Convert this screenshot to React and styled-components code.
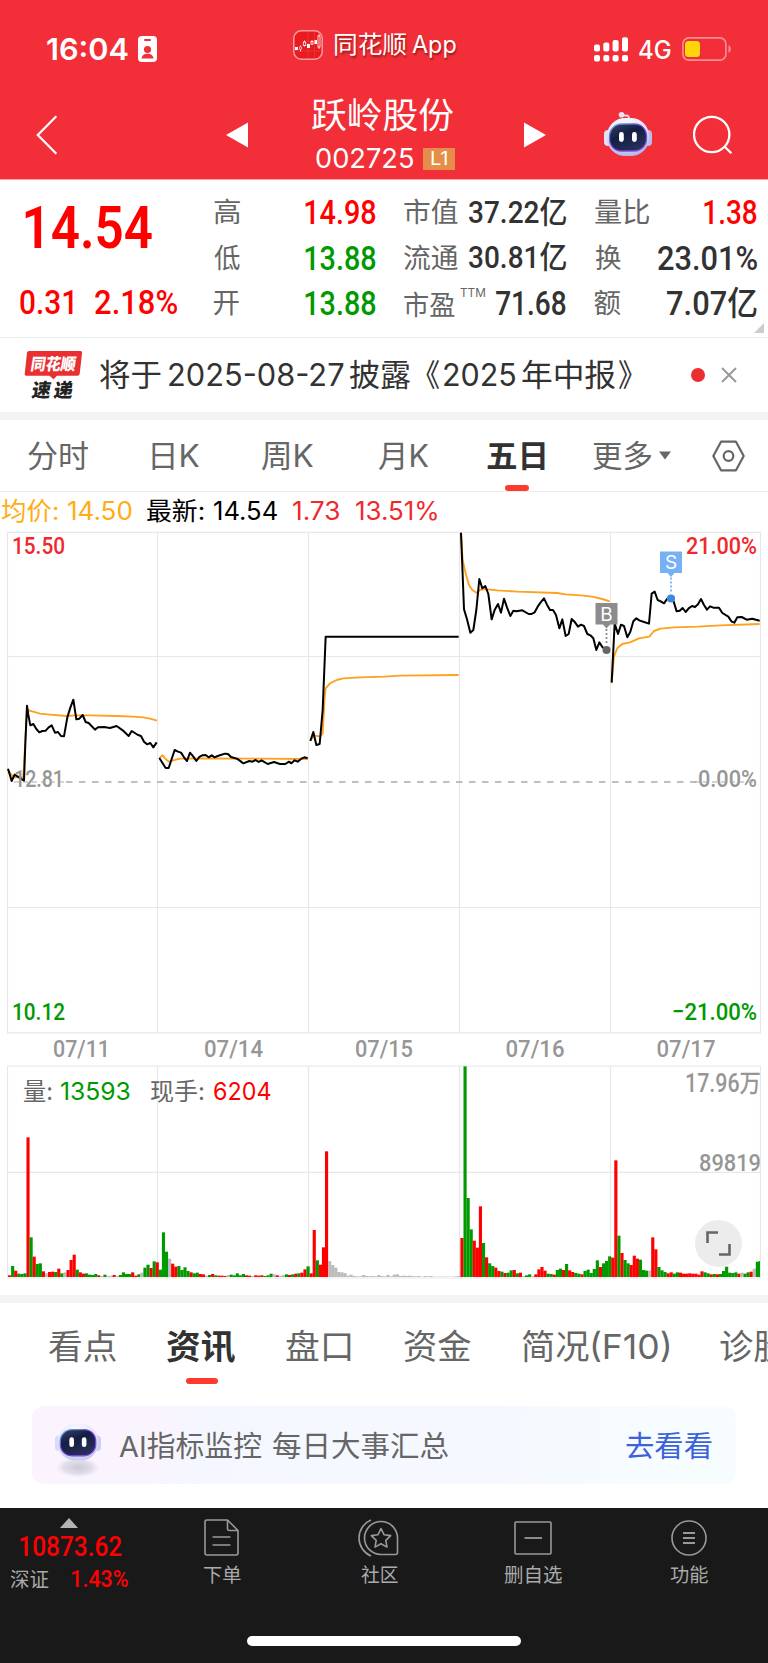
import React, { useLayoutEffect, useRef, useState } from 'react';
import styled, { createGlobalStyle, css } from 'styled-components';

const SANS = '"Inter", "Noto Sans CJK SC", sans-serif';
const DIGITS = '"Roboto", "Noto Sans CJK SC", sans-serif';

const GlobalStyle = createGlobalStyle`
  * { box-sizing: border-box; }
  body { margin: 0; background: #fff; font-family: ${SANS}; }
  svg { display: block; flex: none; }
`;

/* ---------- text that is fitted to a known width ---------- */

const LabelBox = styled.span`
  flex: none;
  display: block;
  width: ${(p) => p.$w}px;
  height: ${(p) => p.$size}px;
  line-height: ${(p) => p.$size}px;
  margin-left: ${(p) => p.$gap || 0}px;
  margin-bottom: ${(p) => (p.$lift || 0) * 2}px;
  font-family: ${(p) => (p.$digits ? DIGITS : SANS)};
  font-size: ${(p) => p.$size}px;
  font-weight: ${(p) => p.$weight || 400};
  color: ${(p) => p.$color || 'inherit'};
  white-space: pre;
  ${(p) =>
    p.$shadow &&
    css`
      text-shadow: 1px 2px 2px rgba(90, 0, 0, 0.55);
    `}
`;

const LabelInk = styled.span`
  display: inline-block;
  transform-origin: 0 50%;
`;

function Label({ w, size, weight = 400, color, digits, gap, lift, shadow, children }) {
  const ref = useRef(null);
  const [fit, setFit] = useState({ x: 0, s: 1 });
  useLayoutEffect(() => {
    const ctx = document.createElement('canvas').getContext('2d');
    ctx.font = `${weight} ${size}px ${digits ? DIGITS : SANS}`;
    const m = ctx.measureText(ref.current.textContent);
    const s = w / (m.actualBoundingBoxRight + m.actualBoundingBoxLeft);
    setFit({ x: m.actualBoundingBoxLeft * s, s });
  }, [w, size, weight, digits, children]);
  return (
    <LabelBox $w={w} $size={size} $weight={weight} $color={color} $digits={digits} $gap={gap} $lift={lift} $shadow={shadow}>
      <LabelInk ref={ref} style={{ transform: `translateX(${fit.x}px) scaleX(${fit.s})` }}>
        {children}
      </LabelInk>
    </LabelBox>
  );
}

const IconSlot = styled.span`
  flex: none;
  display: block;
  margin-left: ${(p) => p.$gap || 0}px;
  margin-bottom: ${(p) => (p.$lift || 0) * 2}px;
`;

/* ---------- page ---------- */

const Page = styled.main`
  width: 768px;
  height: 1663px;
  overflow: hidden;
  display: flex;
  flex-direction: column;
  background: #fff;
`;

const Row = styled.div`
  display: flex;
  align-items: center;
`;

const Divider = styled.div`
  flex: none;
  height: 8px;
  background: #f4f4f4;
`;

/* ---------- header ---------- */

const Header = styled.header`
  flex: none;
  height: 180px;
  background: #f22f38;
  color: #fff;
  border-bottom: 1px solid #f9a5a9;
`;

const StatusBar = styled(Row)`
  height: 98px;
  padding-left: 47px;
`;

const NavBar = styled(Row)`
  height: 81px;
  padding-left: 36px;
`;

const StockTitle = styled.div`
  width: 143px;
  height: 81px;
  margin-left: 64px;
`;

const NameLine = styled(Row)`
  height: 33px;
`;

const CodeLine = styled(Row)`
  height: 41px;
  margin-top: 7px;
  padding-left: 4px;
`;

const LevelBadge = styled.span`
  display: flex;
  align-items: center;
  width: 32px;
  height: 22px;
  margin-left: 10px;
  padding-left: 8px;
  background: #e58e49;
`;

function Robot({ pale }) {
  const id = pale ? 'robotPale' : 'robot';
  return (
    <svg width={pale ? 48 : 50} height={pale ? 62 : 46} viewBox={pale ? '0 0 50 64' : '0 0 50 46'} preserveAspectRatio="none">
      <defs>
        <radialGradient id={`${id}Head`} cx="45%" cy="25%" r="80%">
          <stop offset="0" stopColor="#fff" />
          <stop offset="0.6" stopColor="#e4e4fa" />
          <stop offset="1" stopColor={pale ? '#c4c7f0' : '#aaaee6'} />
        </radialGradient>
        <linearGradient id={`${id}Rim`} x1="0" y1="0" x2="1" y2="1">
          <stop offset="0" stopColor="#63b8ef" />
          <stop offset="0.5" stopColor="#6a39c8" />
          <stop offset="1" stopColor="#8a5af0" />
        </linearGradient>
        <linearGradient id={`${id}Face`} x1="0" y1="0" x2="0.6" y2="1">
          <stop offset="0" stopColor="#3b4466" />
          <stop offset="0.45" stopColor="#141d43" />
          <stop offset="1" stopColor="#28305a" />
        </linearGradient>
        <radialGradient id={`${id}Shade`}>
          <stop offset="0" stopColor="#cdc8d6" />
          <stop offset="0.7" stopColor="#e3deea" />
          <stop offset="1" stopColor="#f3edf8" stopOpacity="0.4" />
        </radialGradient>
      </defs>
      {pale && <ellipse cx="25" cy="52" rx="22" ry="10" fill={`url(#${id}Shade)`} />}
      <path d="M19 4.5h4.5a2.5 2.5 0 0 1 2.500 2.500v3" fill="none" stroke={pale ? '#f6f4fc' : '#dcdcf4'} strokeWidth="2" />
      <circle cx="18.500" cy="3.800" r="2.800" fill={pale ? '#f8f6fd' : '#e6e6f8'} />
      <rect x="1" y="19" width="8" height="16" rx="4" fill={pale ? '#d6dbf6' : '#dfe1f7'} />
      <rect x="41" y="19" width="8" height="16" rx="4" fill={pale ? '#cdd0f2' : '#b9bdea'} />
      <rect x="4" y="7" width="42" height="38" rx="18" fill={`url(#${id}Head)`} />
      <rect x="6.500" y="13" width="37" height="27" rx="12" fill={`url(#${id}Face)`} stroke={`url(#${id}Rim)`} strokeWidth="1.300" />
      <rect x="16" y="21" width="4.800" height="10" rx="2.400" fill="#fff" />
      <rect x="29" y="21" width="4.800" height="10" rx="2.400" fill="#fff" />
    </svg>
  );
}

function AppHeader() {
  return (
    <Header>
      <StatusBar>
        <Label w={81} size={30} weight={600}>16:04</Label>
        <IconSlot $gap={10}>
          <svg width="19" height="26" viewBox="0 0 19 26">
            <rect width="19" height="26" rx="4" fill="#fff" />
            <rect x="6" y="3" width="7" height="2" rx="1" fill="#f22f38" />
            <circle cx="9.500" cy="13.500" r="3.600" fill="#f22f38" />
            <path d="M3.500 22.500c.5-3.500 3-4.800 6-4.800s5.500 1.300 6 4.800z" fill="#f22f38" />
          </svg>
        </IconSlot>
        <IconSlot $gap={136} $lift={4.5}>
          <svg width="30" height="30" viewBox="0 0 30 30">
            <rect x="0.800" y="0.800" width="28.400" height="28.400" rx="7.500" fill="#e81c20" stroke="#f79c9f" strokeWidth="1.500" />
            <path d="M15 2v26M21.500 2v26M2 21h26" stroke="#ef4548" strokeWidth="0.500" />
            <rect x="2" y="17" width="3" height="3" fill="#fff" />
            <path d="M26 4v15M7.500 15.500v6M11.500 10.500v6M19 10v5" stroke="#fff" strokeWidth="0.800" />
            <rect x="6.500" y="16.500" width="2" height="3" rx="1" fill="#e81c20" stroke="#fff" strokeWidth="0.800" />
            <rect x="10.300" y="12" width="2.400" height="3.500" fill="#e81c20" stroke="#fff" strokeWidth="0.800" />
            <rect x="14" y="14" width="3" height="4" fill="#fff" />
            <rect x="18" y="11.500" width="2" height="2.500" fill="#e81c20" stroke="#fff" strokeWidth="0.800" />
            <rect x="21.500" y="10" width="2.500" height="4" fill="#fff" />
            <rect x="25" y="6" width="2" height="11" fill="#e81c20" stroke="#fff" strokeWidth="0.800" />
          </svg>
        </IconSlot>
        <Label w={71} size={24} gap={12} lift={4} shadow>同花顺</Label>
        <Label w={44} size={24} gap={6} lift={4} shadow>App</Label>
        <IconSlot $gap={138}>
          <svg width="34" height="25" viewBox="0 0 34 25" fill="#fff">
            <rect x="0" y="7.500" width="6" height="7" rx="2" />
            <rect x="9.300" y="5.500" width="6" height="9" rx="2" />
            <rect x="18.600" y="3" width="6" height="11.500" rx="2" />
            <rect x="28" y="0.300" width="6" height="14.200" rx="2" />
            <rect x="0" y="18" width="6" height="6.500" rx="2" />
            <rect x="9.300" y="18" width="6" height="6.500" rx="2" />
            <rect x="18.600" y="18" width="6" height="6.500" rx="2" />
            <rect x="28" y="18" width="6" height="6.500" rx="2" />
          </svg>
        </IconSlot>
        <Label w={32} size={25} weight={500} gap={11} lift={-1}>4G</Label>
        <IconSlot $gap={11}>
          <svg width="50" height="24" viewBox="0 0 50 24">
            <rect x="0.900" y="0.900" width="43" height="22.200" rx="6" fill="none" stroke="#f88f94" strokeWidth="1.600" />
            <rect x="3" y="4" width="15" height="16" rx="3.500" fill="#ffd60a" />
            <path d="M46.500 8c3 1.500 3 6.500 0 8z" fill="#f88f94" />
          </svg>
        </IconSlot>
      </StatusBar>
      <NavBar>
        <IconSlot $lift={3.5}>
          <svg width="22" height="40" viewBox="0 0 22 40">
            <path d="M20.300 1.300L1.800 20l18.500 18.700" fill="none" stroke="#fff" strokeWidth="2.200" />
          </svg>
        </IconSlot>
        <IconSlot $gap={168} $lift={3.5}>
          <svg width="22" height="26" viewBox="0 0 22 26"><path d="M22 0.500v25L0 13z" fill="#fff" /></svg>
        </IconSlot>
        <StockTitle>
          <NameLine><Label w={142} size={35} lift={-0.75}>跃岭股份</Label></NameLine>
          <CodeLine>
            <Label w={97} size={27}>002725</Label>
            <LevelBadge><Label w={16} size={18}>L1</Label></LevelBadge>
          </CodeLine>
        </StockTitle>
        <IconSlot $gap={69} $lift={3.5}>
          <svg width="22" height="26" viewBox="0 0 22 26"><path d="M0 0.500v25L22 13z" fill="#fff" /></svg>
        </IconSlot>
        <IconSlot $gap={57} $lift={4.5}><Robot /></IconSlot>
        <IconSlot $gap={40} $lift={3.5}>
          <svg width="40" height="40" viewBox="0 0 40 40" fill="none" stroke="#fff" strokeWidth="2.300">
            <circle cx="18.700" cy="19.500" r="17.700" />
            <path d="M31.500 31.500l6.800 6.800" />
          </svg>
        </IconSlot>
      </NavBar>
    </Header>
  );
}

/* ---------- quote ---------- */

const Quote = styled.section`
  flex: none;
  display: flex;
  position: relative;
  height: 158px;
  border-bottom: 1px solid #ececec;
`;

const PriceBlock = styled.div`
  width: 213.5px;
  padding: 18px 0 0 20px;
`;

const LastPrice = styled(Row)`
  height: 60px;
  padding-left: 5px;
`;

const Change = styled(Row)`
  height: 44px;
  margin-top: 22px;
`;

const StatGrid = styled.div`
  display: grid;
  grid-template-columns: 162px 162px 162px;
  grid-auto-rows: 45.500px;
  column-gap: 28.500px;
  padding-top: 10px;
`;

const Stat = styled(Row)`
  justify-content: space-between;
`;

const CornerMark = styled.i`
  position: absolute;
  right: 4px;
  bottom: 4px;
  border-left: 10px solid transparent;
  border-bottom: 10px solid #ccc;
`;

const RED = '#ff0000';
const GREEN = '#009900';
const INK = '#323232';
const GREY = '#666';

const stats = [
  { name: '高', nw: 26, value: '14.98', vw: 71, color: RED },
  { name: '市值', nw: 54, value: '37.22亿', vw: 97, size: 30.5 },
  { name: '量比', nw: 54, value: '1.38', vw: 53, color: RED },
  { name: '低', nw: 26, value: '13.88', vw: 71, color: GREEN },
  { name: '流通', nw: 54, value: '30.81亿', vw: 97, size: 30.5 },
  { name: '换', nw: 26, value: '23.01%', vw: 99 },
  { name: '开', nw: 26, value: '13.88', vw: 71, color: GREEN },
  { name: '市盈', nw: 51, value: '71.68', vw: 70, sup: true },
  { name: '额', nw: 26, value: '7.07亿', vw: 90 },
];

function QuotePanel() {
  return (
    <Quote>
      <PriceBlock>
        <LastPrice><Label w={127} size={60} weight={600} digits color={RED}>14.54</Label></LastPrice>
        <Change>
          <Label w={53} size={33} weight={500} digits color={RED}>0.31</Label>
          <Label w={82} size={33} weight={500} digits color={RED} gap={22}>2.18%</Label>
        </Change>
      </PriceBlock>
      <StatGrid>
        {stats.map((s, i) => (
          <Stat key={i}>
            <Row>
              <Label w={s.nw} size={27.5} color={GREY} lift={s.sup ? -2 : 0}>{s.name}</Label>
              {s.sup && <Label w={25} size={12} color={GREY} gap={5} lift={11}>TTM</Label>}
            </Row>
            <Label w={s.vw} size={s.size || 33} weight={500} digits color={s.color || INK}>{s.value}</Label>
          </Stat>
        ))}
      </StatGrid>
      <CornerMark />
    </Quote>
  );
}

/* ---------- notice ---------- */

const Notice = styled(Row)`
  flex: none;
  height: 74px;
  padding: 0 0 1px 24px;
  color: #323232;
`;

const LogoText = styled.text`
  font-family: ${SANS};
  font-weight: 900;
  fill: ${(p) => p.$fill};
`;

function NoticeBar() {
  return (
    <Notice>
      <svg width="60" height="50" viewBox="0 0 60 50">
        <path d="M5 1h51.500q1.800 0 1.600 1.800l-2.400 21q-.3 1.900-2.200 1.900H33l-3.500 3.500-4-3.500H2.300q-1.800 0-1.600-1.800L3 2.800Q3.200 1 5 1z" fill="#ea2f32" />
        <g transform="translate(6 20) skewX(-9)">
          <LogoText $fill="#fff" fontSize="16.500" textLength="45" lengthAdjust="spacingAndGlyphs">同花顺</LogoText>
        </g>
        <g transform="translate(7 46.500) skewX(-9)">
          <LogoText $fill="#222" fontSize="19" textLength="19" lengthAdjust="spacingAndGlyphs">速</LogoText>
          <LogoText $fill="#222" fontSize="19" x="22" textLength="19" lengthAdjust="spacingAndGlyphs">递</LogoText>
        </g>
      </svg>
      <Label w={61} size={31} gap={15.5}>将于</Label>
      <Label w={175} size={31} gap={8}>2025-08-27</Label>
      <Label w={61} size={31} gap={6}>披露</Label>
      <Label w={13} size={31} gap={15}>《</Label>
      <Label w={71} size={31} gap={5}>2025</Label>
      <Label w={93} size={31} gap={7}>年中报</Label>
      <Label w={13} size={31} gap={4}>》</Label>
      <IconSlot $gap={59.5}>
        <svg width="14" height="14"><circle cx="7" cy="7" r="7" fill="#ea2f32" /></svg>
      </IconSlot>
      <IconSlot $gap={16}>
        <svg width="16" height="16"><path d="M1 1l14 14M15 1L1 15" stroke="#999" strokeWidth="2" /></svg>
      </IconSlot>
    </Notice>
  );
}

/* ---------- chart tabs ---------- */

const PeriodTabs = styled(Row)`
  flex: none;
  height: 72px;
  padding-left: 28px;
  color: ${GREY};
  border-bottom: 1px solid #ececec;
`;

const Tab = styled.div`
  flex: none;
  position: relative;
  display: flex;
  align-items: center;
  height: 100%;
  margin-left: ${(p) => p.$gap || 0}px;
`;

const Underline = styled.i`
  position: absolute;
  left: 50%;
  bottom: ${(p) => p.$bottom}px;
  width: ${(p) => p.$w}px;
  height: 6px;
  margin-left: ${(p) => -p.$w / 2 + 0.5}px;
  border-radius: 3px;
  background: #ff3b30;
`;

function PeriodBar() {
  return (
    <PeriodTabs>
      <Tab><Label w={60} size={31}>分时</Label></Tab>
      <Tab $gap={64}><Label w={47} size={31}>日K</Label></Tab>
      <Tab $gap={63}><Label w={51} size={31}>周K</Label></Tab>
      <Tab $gap={65}><Label w={50} size={31}>月K</Label></Tab>
      <Tab $gap={59}>
        <Label w={58} size={31} weight={700} color={INK}>五日</Label>
        <Underline $w={24} $bottom={0} />
      </Tab>
      <Tab $gap={48}>
        <Label w={59} size={31}>更多</Label>
        <IconSlot $gap={7}>
          <svg width="12" height="9" viewBox="0 0 12 9"><path d="M0 0.500h12L6 8.500z" fill="#666" /></svg>
        </IconSlot>
      </Tab>
      <IconSlot $gap={41}>
        <svg width="33" height="32" viewBox="0 0 33 32" fill="none" stroke="#666" strokeWidth="2.200">
          <path d="M9 1.700h15L31.700 16 24 30.300H9L1.300 16z" strokeLinejoin="round" />
          <circle cx="16.500" cy="16" r="4.800" />
        </svg>
      </IconSlot>
    </PeriodTabs>
  );
}

const Legend = styled(Row)`
  flex: none;
  height: 39px;
  padding-left: 1px;
`;

function PriceLegend() {
  return (
    <Legend>
      <Label w={57} size={25} color="#ffad14">均价:</Label>
      <Label w={64} size={25} color="#ffad14" gap={9.5}>14.50</Label>
      <Label w={57} size={25} color="#000" gap={15.5}>最新:</Label>
      <Label w={63} size={25} color="#000" gap={10}>14.54</Label>
      <Label w={46} size={25} color="#f0282c" gap={16}>1.73</Label>
      <Label w={81} size={25} color="#f0282c" gap={17}>13.51%</Label>
    </Legend>
  );
}

/* ---------- charts ---------- */

const price = [
  '24,1076 35,1113 44,1094 58,1103 72,1112 76,1000 81,887 85,915 91,946 100,942 109,957 118,967 127,963 137,962 146,952 155,946 165,968 174,966 183,978 192,979 202,922 211,893 220,869 229,928 238,926 248,915 257,936 266,939 285,959 294,952 312,951 330,954 350,948 368,961 386,978 395,963 414,975 423,978 432,995 441,1003 451,999 460,1012 470,997',
  '478,1044 497,1074 506,1074 515,1047 524,1020 534,1025 543,1028 552,1042 561,1053 570,1028 580,1040 589,1053 598,1041 607,1036 617,1035 626,1042 635,1036 644,1042 653,1038 675,1031 684,1032 693,1041 711,1046 730,1060 748,1053 757,1055 767,1050 776,1056 785,1051 803,1062 822,1056 840,1062 856,1062 867,1055 874,1060 884,1051 893,1055 904,1046 913,1042 923,1045',
  '931,993 940,966 949,1005 959,1002 968,900 977,680 1376,680',
  '1383,368 1392,598 1401,628 1411,668 1420,660 1429,600 1438,507 1447,535 1456,528 1465,552 1475,628 1484,600 1494,582 1503,608 1512,566 1521,592 1531,618 1540,602 1549,604 1567,601 1586,612 1595,612 1604,607 1613,590 1622,577 1632,565 1641,584 1650,600 1659,600 1668,615 1678,655 1687,628 1697,678 1706,672 1715,627 1725,637 1734,650 1743,644 1752,648 1762,672 1771,676 1780,685 1789,720 1798,697 1808,712 1818,718',
  '1835,818 1844,640 1854,672 1863,644 1872,648 1882,682 1891,665 1900,634 1909,625 1918,631 1932,636 1947,641 1955,551 1964,545 1973,570 1982,574 1992,580 2002,566 2013,564 2021,575 2030,604 2039,602 2048,594 2057,606 2066,595 2076,588 2085,591 2094,583 2103,567 2112,585 2121,599 2130,589 2140,593 2157,593 2167,609 2185,620 2194,634 2203,638 2212,622 2225,621 2240,629 2257,626 2279,632',
];

const average = [
  '24,1080 40,1102 70,1102 81,900 100,905 120,911 150,914 200,918 225,916 270,916 350,918 400,920 430,922 450,926 471,932',
  '478,1044 488,1036 497,1047 506,1055 540,1046 600,1045 923,1047',
  '931,990 945,977 960,979 968,970 974,860 977,835 990,820 1010,810 1030,805 1080,802 1152,800 1202,797 1376,795',
  '1383,368 1388,450 1397,490 1407,525 1417,540 1432,550 1439,540 1452,537 1492,541 1552,545 1672,549 1697,553 1742,556 1777,560 1807,567 1829,574',
  '1835,818 1842,740 1852,714 1867,702 1890,697 1917,685 1948,680 1962,663 1982,656 2022,652 2092,650 2162,646 2279,642',
];

/* r = up, g = down, n = unchanged; the number is the bar height */
const volume = [
  'r5 g33 r19 g10 g9 g11 r419 g119 r61 g39 g41 r17 n11 r15 r16 g15 r25 g11 n14 r21 r51 r67 g22 r14 r10 g11 g7 g6 g9 r5 n3 g7 n3 n4 r6 n3 g6 g14 g9 g9 r14 r4 g8 n13 g28 g37 r27 g47 r44',
  'g22 g134 g76 n55 r40 r31 g33 g21 g29 g18 r14 g11 g13 r9 r8 n4 g6 r9 g5 r4 r4 r3 n6 g7 g5 g11 g5 g9 r5 r4 n3 r5 r4 r5 g3 g5 g10 n8 r5 n3 n6 g8 r6 g8 r10 g11 r13 r23 g32',
  'r11 r141 g50 r37 r89 r377 n48 n36 n28 n15 n14 n12 n4 n7 n3 n2 n2 n6 n3 n2 n3 n2 n6 n3 n2 n6 n2 n7 n8 n3 n4 n3 n4 n3 n2 n3 n1 n3 n2 n3 n1 n1 n1 n1 n1 n1 n1 n2 n3',
  'r117 g632 g237 g143 r109 r88 r212 g102 r59 g41 g33 r28 r18 g16 r12 g13 g20 r21 g11 r13 n3 g5 g8 n3 r8 r23 r30 r19 g10 g9 r7 g21 g25 r21 g39 r20 r15 g12 g10 r8 g18 g22 g12 g24 g50 r30 g41 g48 g62',
  'r58 r350 g124 r72 g51 g41 r36 r64 r55 g52 g21 g19 n19 r119 r83 g30 g20 g15 r11 r14 g10 g14 r13 r10 r10 r11 r10 r10 r7 r17 g14 g11 r8 g9 r8 g9 g18 g31 g13 g12 g14 r10 n13 g10 g14 r16 n25 g46 g48',
];
const barColor = { r: '#ff0000', g: '#009900', n: '#bbb' };
const gridX = [7.5, 157.5, 308.5, 459.5, 610.5, 760.5];

const ChartText = styled.text`
  font-family: ${DIGITS};
  font-size: ${(p) => p.$size || 24.5}px;
  font-weight: ${(p) => p.$weight || 500};
  fill: ${(p) => p.$fill || '#969696'};
  text-anchor: ${(p) => p.$anchor || 'start'};
`;

function Caption({ x, y, w, fill, size, weight, anchor, children }) {
  return (
    <ChartText x={x} y={y} textLength={w} lengthAdjust="spacingAndGlyphs" $fill={fill} $size={size} $weight={weight} $anchor={anchor}>
      {children}
    </ChartText>
  );
}

const MarkerText = styled.text`
  font-family: ${SANS};
  font-size: 19px;
  fill: #fff;
  text-anchor: middle;
`;

function Marker({ x, top, dot, color, dotColor, letter }) {
  return (
    <g>
      <path d={`M${x} ${top + 26}V${dot - 5}`} stroke={color} strokeWidth="1.800" strokeDasharray="2 2" />
      <circle cx={x} cy={dot} r="4" fill={dotColor} />
      <path d={`M${x - 11} ${top}h22v21.500h-7.500l-3.500 4-3.500-4h-7.500z`} fill={color} />
      <MarkerText x={x} y={top + 17.5}>{letter}</MarkerText>
    </g>
  );
}

const ChartArea = styled.section`
  flex: none;
  position: relative;
  height: 764px;
`;

const ExpandButton = styled.button`
  position: absolute;
  left: 695px;
  top: 689px;
  width: 47px;
  height: 47px;
  padding: 0;
  border: 0;
  border-radius: 50%;
  background: #ececec;
  display: grid;
  place-items: center;
`;

const VolumeLegend = styled(Row)`
  position: absolute;
  left: 24px;
  top: 546px;
  height: 29px;
`;

function Charts() {
  return (
    <ChartArea>
      <svg width="768" height="764" viewBox="0 531 768 764">
        <clipPath id="volumeArea"><rect x="8" y="1066" width="752" height="212" /></clipPath>
        <g stroke="#e8e8e8" strokeWidth="1.200" fill="none">
          {gridX.map((x) => (
            <path key={x} d={`M${x} 532V1033M${x} 1066V1278`} />
          ))}
          <path d="M7 532.300H761M7 656.500H761M7 907.500H761M7 1032.800H761M7 1066H761M7 1172.300H761M7 1278H761" />
        </g>
        <path d="M66 782H698" stroke="#aaa" strokeWidth="1.500" strokeDasharray="6.500 6.500" />
        <Caption x={12} y={554} w={53} fill="#f0282c">15.50</Caption>
        <Caption x={757} y={554} w={71} fill="#f0282c" anchor="end">21.00%</Caption>
        <Caption x={12} y={1020} w={53} fill={GREEN}>10.12</Caption>
        <Caption x={757} y={1020} w={85} fill={GREEN} anchor="end">−21.00%</Caption>
        <g transform="translate(0 410) scale(0.33333)" fill="none" strokeLinejoin="round">
          {average.map((p, i) => <polyline key={i} points={p} stroke="#ffa01e" strokeWidth="5.600" />)}
          {price.map((p, i) => <polyline key={i} points={p} stroke="#000" strokeWidth="6" />)}
        </g>
        <Caption x={14} y={787} w={50}>12.81</Caption>
        <Caption x={757} y={787} w={59} anchor="end">0.00%</Caption>
        <path d="M14 782H66M694 782H757" stroke="#aaa" strokeWidth="1.200" strokeDasharray="5 4" />
        <Caption x={53} y={1057} w={57}>07/11</Caption>
        <Caption x={204} y={1057} w={59}>07/14</Caption>
        <Caption x={355} y={1057} w={58}>07/15</Caption>
        <Caption x={505.5} y={1057} w={59}>07/16</Caption>
        <Caption x={656.5} y={1057} w={59}>07/17</Caption>
        <g clipPath="url(#volumeArea)">
          {volume.map((day, d) =>
            day.split(' ').map((b, i) => {
              const h = Number(b.slice(1)) / 3;
              return (
                <rect
                  key={`${d}-${i}`}
                  x={8 + d * 150.8 + i * 3.077}
                  y={1277 - h}
                  width="3.150"
                  height={h}
                  fill={barColor[b[0]]}
                />
              );
            })
          )}
        </g>
        <Caption x={761} y={1092} w={76} size={25} anchor="end">17.96万</Caption>
        <Caption x={761} y={1171} w={62} anchor="end">89819</Caption>
        <Marker x={606.5} top={603} dot={650} color="#8c8c8c" dotColor="#666" letter="B" />
        <Marker x={671} top={551.5} dot={598.5} color="#78b0f4" dotColor="#3f86dd" letter="S" />
      </svg>
      <VolumeLegend>
        <Label w={28} size={24} color={GREY}>量:</Label>
        <Label w={69} size={24} color={GREEN} gap={9}>13593</Label>
        <Label w={53} size={24} color={GREY} gap={21}>现手:</Label>
        <Label w={57} size={24} color={RED} gap={9.5}>6204</Label>
      </VolumeLegend>
      <ExpandButton>
        <svg width="25" height="25" viewBox="0 0 25 25" fill="none" stroke="#666" strokeWidth="2.600">
          <path d="M1.500 12V1.500H12M13 23.500H23.500V13" />
        </svg>
      </ExpandButton>
    </ChartArea>
  );
}

/* ---------- info tabs and banner ---------- */

const InfoTabs = styled(Row)`
  flex: none;
  width: 768px;
  overflow: hidden;
  height: 103px;
  padding: 0 0 15px 49px;
  color: ${GREY};
`;

function InfoBar() {
  return (
    <InfoTabs>
      <Tab><Label w={67} size={34.5}>看点</Label></Tab>
      <Tab $gap={51}>
        <Label w={68} size={34.5} weight={600} color={INK}>资讯</Label>
        <Underline $w={32} $bottom={7} />
      </Tab>
      <Tab $gap={51}><Label w={65} size={34.5}>盘口</Label></Tab>
      <Tab $gap={53}><Label w={67} size={34.5}>资金</Label></Tab>
      <Tab $gap={51}>
        <Label w={67} size={34.5}>简况</Label>
        <Label w={77} size={34.5} gap={3}>(F10)</Label>
      </Tab>
      <Tab $gap={51}><Label w={67} size={34.5}>诊股</Label></Tab>
    </InfoTabs>
  );
}

const Banner = styled(Row)`
  flex: none;
  width: 704px;
  height: 78px;
  margin: 0 32px 24px;
  padding-left: 22px;
  border-radius: 12px;
  background: linear-gradient(95deg, #fbf4ff 0%, #faf4ff 18%, #f4f7ff 24%, #f5f9ff 65%, #f7fdff 100%);
`;

function AiBanner() {
  return (
    <Banner>
      <IconSlot $lift={-3}><Robot pale /></IconSlot>
      <Label w={142} size={29} color={GREY} gap={16.5} lift={-1}>AI指标监控</Label>
      <Label w={175} size={29} color={GREY} gap={12} lift={-1}>每日大事汇总</Label>
      <Label w={86} size={29} color="#3a62dc" gap={178} lift={-1}>去看看</Label>
    </Banner>
  );
}

/* ---------- bottom bar ---------- */

const BottomBar = styled.nav`
  flex: none;
  height: 155px;
  background: #191919;
  display: flex;
  flex-direction: column;
  align-items: center;
`;

const BottomItems = styled.div`
  display: flex;
  width: 768px;
  height: 128px;
`;

const IndexBlock = styled.div`
  width: 150px;
  padding: 10px 0 0 10px;
`;

const IndexArrow = styled.i`
  display: block;
  width: 18px;
  margin-left: 50px;
  border: 9px solid transparent;
  border-top: 0;
  border-bottom: 10px solid #b4b4b4;
`;

const IndexRow = styled(Row)`
  height: ${(p) => p.$h}px;
  padding-left: ${(p) => p.$pad || 0}px;
`;

const Action = styled.div`
  display: flex;
  flex-direction: column;
  align-items: center;
  width: ${(p) => p.$w}px;
  margin-left: ${(p) => p.$gap}px;
  padding-top: 9.5px;
  color: #aaa;
`;

const ActionIcon = styled.span`
  display: grid;
  place-items: center;
  height: 40px;
  margin-bottom: 8px;
  padding-right: ${(p) => p.$shift || 0}px;
`;

const HomeIndicator = styled.div`
  width: 274px;
  height: 10px;
  border-radius: 5px;
  background: #fff;
`;

const iconLine = { fill: 'none', stroke: '#999', strokeWidth: 1.6, strokeLinejoin: 'round' };

function BottomNav() {
  return (
    <BottomBar>
      <BottomItems>
        <IndexBlock>
          <IndexArrow />
          <IndexRow $h={39} $pad={10}>
            <Label w={102} size={28.5} weight={500} digits color={RED}>10873.62</Label>
          </IndexRow>
          <IndexRow $h={25}>
            <Label w={39} size={20} color="#aaa">深证</Label>
            <Label w={56} size={24} weight={500} digits color={RED} gap={23} lift={0.5}>1.43%</Label>
          </IndexRow>
        </IndexBlock>
        <Action $w={60} $gap={42.5}>
          <ActionIcon $shift={3}>
            <svg width="35" height="37" viewBox="0 0 35 37" {...iconLine}>
              <path d="M3 1h20.500L34 11.500v22.500a2 2 0 0 1-2 2H3a2 2 0 0 1-2-2V3a2 2 0 0 1 2-2zM23.500 1v8.500a2 2 0 0 0 2 2H34M8.500 18h18M8.500 26h18" />
            </svg>
          </ActionIcon>
          <Label w={37} size={19.5}>下单</Label>
        </Action>
        <Action $w={60} $gap={97}>
          <ActionIcon $shift={4}>
            <svg width="42" height="38" viewBox="0 0 42 38" {...iconLine}>
              <path d="M24 2.500a16.500 16.500 0 0 1 16.500 16.500v14.500a2 2 0 0 1-2 2H24a16.500 16.500 0 0 1 0-33zM14 1a19.500 19.500 0 0 0 0 36" />
              <path d="M24 9.500l3 6.200 6.700.9-4.900 4.700 1.200 6.800-6-3.300-6 3.300 1.200-6.800-4.900-4.700 6.700-.9z" />
            </svg>
          </ActionIcon>
          <Label w={37} size={19.5}>社区</Label>
        </Action>
        <Action $w={60} $gap={93.5}>
          <ActionIcon>
            <svg width="40" height="36" viewBox="0 0 40 36" {...iconLine}>
              <rect x="2" y="2" width="36" height="32" rx="1" />
              <path d="M11.500 18h17.500" strokeWidth="1.800" />
            </svg>
          </ActionIcon>
          <Label w={58} size={19.5}>删自选</Label>
        </Action>
        <Action $w={60} $gap={95.5}>
          <ActionIcon>
            <svg width="38" height="38" viewBox="0 0 38 38" {...iconLine}>
              <circle cx="19" cy="19" r="17" />
              <path d="M13 14h12M13 19h12M13 24h12" strokeWidth="1.800" />
            </svg>
          </ActionIcon>
          <Label w={38} size={19.5}>功能</Label>
        </Action>
      </BottomItems>
      <HomeIndicator />
    </BottomBar>
  );
}

export default function App() {
  return (
    <Page>
      <GlobalStyle />
      <AppHeader />
      <QuotePanel />
      <NoticeBar />
      <Divider />
      <PeriodBar />
      <PriceLegend />
      <Charts />
      <Divider />
      <InfoBar />
      <AiBanner />
      <BottomNav />
    </Page>
  );
}
